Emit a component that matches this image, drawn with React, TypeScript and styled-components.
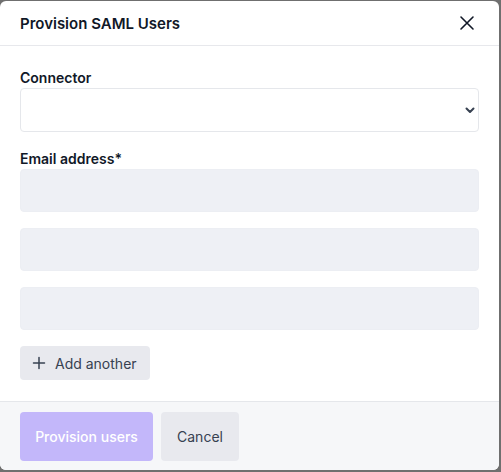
import React from "react";
import styled, { createGlobalStyle } from "styled-components";

const Global = createGlobalStyle`
  html, body { margin: 0; padding: 0; background: #6f6f6f; }
  body { font-family: Inter, "Noto Sans", sans-serif; }
  * { box-sizing: border-box; }
`;

const Modal = styled.div`
  width: 499px;
  height: 469px;
  margin-top: 1px;
  background: #ffffff;
  border-radius: 6px;
  overflow: hidden;
  display: flex;
  flex-direction: column;
`;

const Header = styled.div`
  height: 45px;
  flex: none;
  display: flex;
  align-items: center;
  justify-content: space-between;
  padding: 0 20px 0 20px;
  border-bottom: 1px solid #e7e8ec;
`;

const Title = styled.h2`
  margin: 0;
  font-size: 15px;
  font-weight: 600;
  color: #111827;
`;

const CloseButton = styled.button`
  border: 0;
  background: none;
  padding: 0;
  width: 16px;
  height: 16px;
  display: flex;
  color: #111827;
  margin-right: 4px;
`;

const Body = styled.div`
  flex: 1;
  padding: 22px 20px 0 20px;
  display: flex;
  flex-direction: column;
`;

const Label = styled.label`
  font-size: 14px;
  font-weight: 600;
  color: #111827;
  line-height: 20px;
  display: block;
`;

const SelectBox = styled.div`
  height: 44px;
  border: 1px solid #e5e7eb;
  border-radius: 4px;
  display: flex;
  align-items: center;
  justify-content: flex-end;
  padding-right: 0;
  color: #374151;
`;

const EmailGroup = styled.div`
  margin-top: 17px;
  display: flex;
  flex-direction: column;
`;

const Inputs = styled.div`
  display: flex;
  flex-direction: column;
  gap: 16px;
`;

const TextInput = styled.input`
  height: 43px;
  border: 1px solid #eceef3;
  background: #eef0f5;
  border-radius: 4px;
  width: 100%;
  font: inherit;
`;

const AddButton = styled.button`
  margin-top: 16px;
  align-self: flex-start;
  height: 34px;
  padding: 0 13px 0 12px;
  border: 0;
  border-radius: 4px;
  background: #e8e9ee;
  color: #374151;
  font-family: inherit;
  font-size: 14px;
  display: flex;
  align-items: center;
  gap: 9px;
`;

const Footer = styled.div`
  height: 69px;
  flex: none;
  background: #f6f7f9;
  border-top: 1px solid #e5e7eb;
  padding: 10px 20px 0 20px;
  display: flex;
  gap: 8px;
  align-items: flex-start;
`;

const FooterButton = styled.button<{ $primary?: boolean }>`
  height: 49px;
  border: 0;
  border-radius: 4px;
  padding: 0;
  white-space: nowrap;
  font-family: inherit;
  font-size: 14px;
  font-weight: ${(p) => (p.$primary ? 500 : 400)};
  background: ${(p) => (p.$primary ? "#c3b7fa" : "#e8e9ee")};
  color: ${(p) => (p.$primary ? "#ffffff" : "#374151")};
  width: ${(p) => (p.$primary ? "133px" : "78px")};
`;

export default function App() {
  return (
    <>
      <Global />
      <Modal>
        <Header>
          <Title>Provision SAML Users</Title>
          <CloseButton aria-label="Close">
            <svg width="16" height="16" viewBox="0 0 16 16" fill="none" stroke="currentColor" strokeWidth="1.6" strokeLinecap="round">
              <path d="M2 2L14 14M14 2L2 14" />
            </svg>
          </CloseButton>
        </Header>
        <Body>
          <Label>Connector</Label>
          <SelectBox>
            <svg width="16" height="16" viewBox="0 0 16 16" fill="none" stroke="currentColor" strokeWidth="2" strokeLinecap="round" strokeLinejoin="round">
              <path d="M4.5 6.5L8 10L11.5 6.5" />
            </svg>
          </SelectBox>
          <EmailGroup>
            <Label>Email address*</Label>
            <Inputs>
              <TextInput />
              <TextInput />
              <TextInput />
            </Inputs>
          </EmailGroup>
          <AddButton>
            <svg width="14" height="14" viewBox="0 0 14 14" fill="none" stroke="currentColor" strokeWidth="1.5" strokeLinecap="round">
              <path d="M7 1.5V12.5M1.5 7H12.5" />
            </svg>
            Add another
          </AddButton>
        </Body>
        <Footer>
          <FooterButton $primary>Provision users</FooterButton>
          <FooterButton>Cancel</FooterButton>
        </Footer>
      </Modal>
    </>
  );
}
